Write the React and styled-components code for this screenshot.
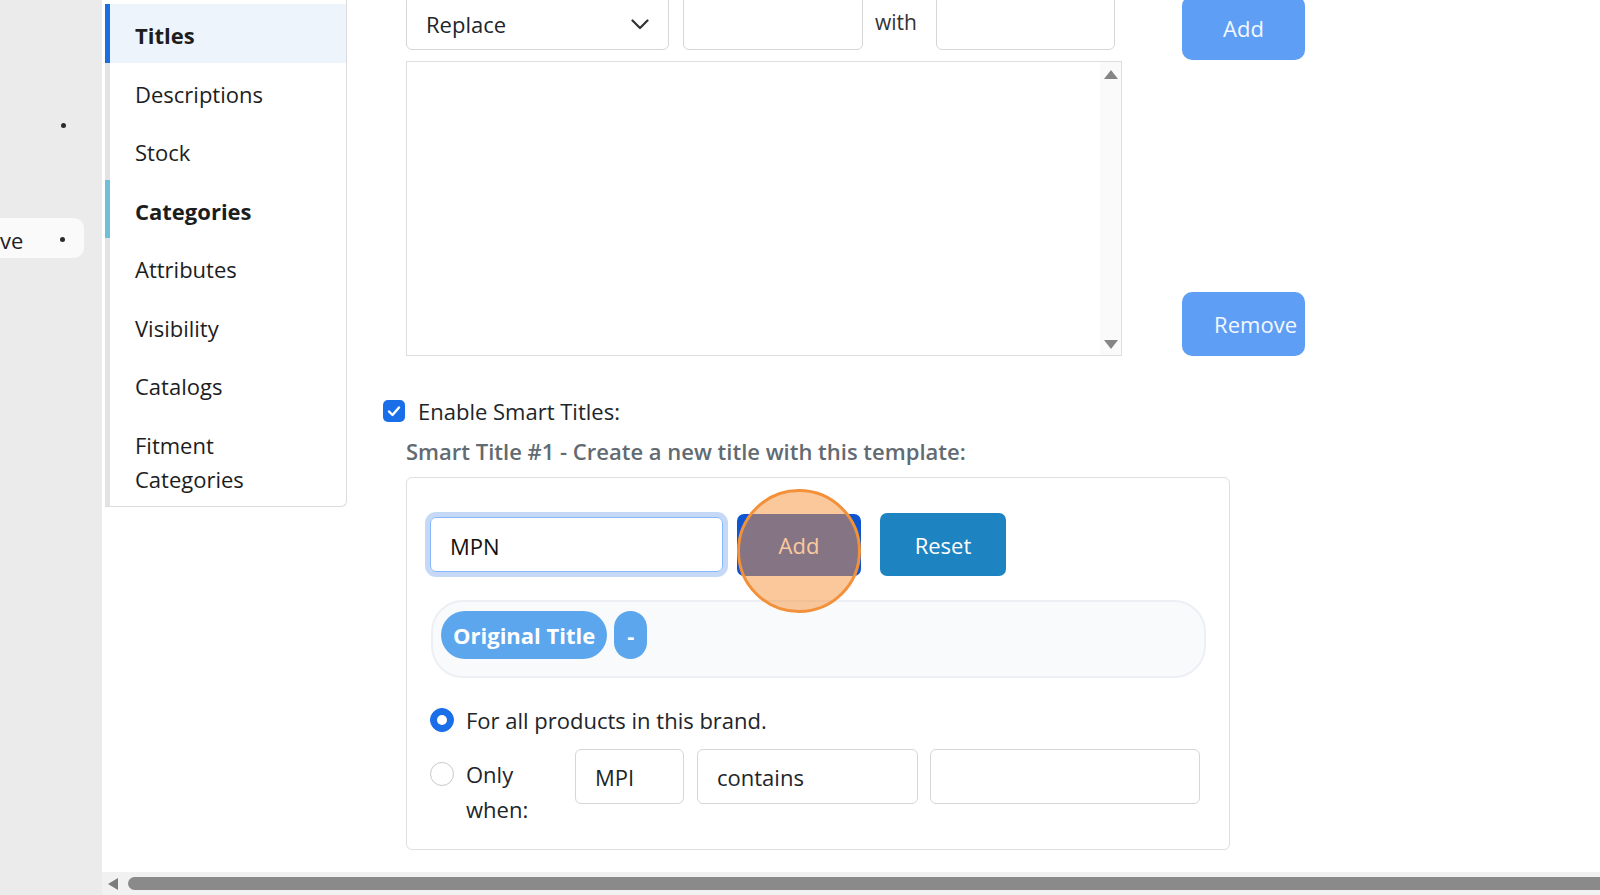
import React from 'react';
import styled, { createGlobalStyle } from 'styled-components';

const FONT = `"Open Sans", "Noto Sans", "DejaVu Sans", sans-serif`;
const FS = 22;

const Global = createGlobalStyle`
  html, body { margin: 0; padding: 0; background: #fff; }
  body { font-family: ${FONT}; color: #212529; overflow: hidden; }
  * { box-sizing: border-box; }
`;

const Page = styled.div`
  display: flex;
  width: 1600px;
  height: 895px;
  overflow: hidden;
  background: #fff;
`;

const Rail = styled.aside`
  width: 102px;
  flex: none;
  background: #ebebeb;
  display: flex;
  flex-direction: column;
`;

const RailDot = styled.span`
  width: 5px;
  height: 5px;
  border-radius: 50%;
  background: #2b2b2b;
  display: block;
  flex: none;
`;

const RailTopDot = styled(RailDot)`
  margin: 123px 0 0 61px;
`;

const RailPill = styled.div`
  margin-top: 90px;
  width: 84px;
  height: 40px;
  background: #fafafa;
  border-radius: 0 10px 10px 0;
  display: flex;
  align-items: center;
  justify-content: space-between;
  padding: 3px 19px 0 0;
  font-size: ${FS}px;
  color: #222;
`;

const Workspace = styled.div`
  flex: 1;
  min-width: 0;
  display: flex;
  flex-direction: column;
`;

const Scroller = styled.div`
  flex: 1;
  display: flex;
  align-items: flex-start;
  overflow: hidden;
  padding-left: 3px;
`;

const HScroll = styled.div`
  height: 23px;
  flex: none;
  background: #f1f1f1;
  display: flex;
  align-items: center;
  padding-left: 6px;
  gap: 10px;
`;

const ScrollArrowLeft = styled.span`
  width: 0;
  height: 0;
  border-top: 6px solid transparent;
  border-bottom: 6px solid transparent;
  border-right: 10px solid #7c7c7c;
  flex: none;
`;

const ScrollThumb = styled.div`
  flex: 1;
  height: 13px;
  background: #8a8a8a;
  border-radius: 7px 0 0 7px;
`;

const Sidebar = styled.nav`
  width: 242px;
  flex: none;
  padding-top: 4px;
  border-right: 1px solid #dcdcdc;
  border-bottom: 1px solid #dcdcdc;
  border-bottom-right-radius: 6px;
  display: flex;
  flex-direction: column;
`;

const NavItem = styled.div`
  padding: 14px 40px 10.5px 25px;
  line-height: 34px;
  font-size: ${FS}px;
  color: #1d1d1d;
  border-left: 5px solid ${(p) => p.$bar || '#e3e3e3'};
  background: ${(p) => (p.$active ? '#eef4fc' : 'transparent')};
  font-weight: ${(p) => (p.$bold ? 700 : 400)};
`;

const Main = styled.main`
  margin-left: 36px;
  margin-top: -5px;
  width: 940px;
  flex: none;
  display: flex;
  flex-direction: column;
`;

const TopGrid = styled.div`
  margin-left: 23px;
  display: grid;
  grid-template-columns: 716px 123px;
  column-gap: 60px;
  row-gap: 1px;
`;

const FilterRow = styled.div`
  display: flex;
  align-items: flex-start;
  height: 65px;
`;

const Field = styled.div`
  height: 55px;
  width: ${(p) => p.$w}px;
  flex: none;
  border: 1px solid #d6d6d6;
  border-radius: 6px;
  background: #fff;
  display: flex;
  align-items: center;
  justify-content: space-between;
  padding: ${(p) => p.$pt || 0}px 19px 0;
  font-size: ${FS}px;
  color: #212529;
  margin-left: ${(p) => p.$ml || 0}px;
`;

const WithLabel = styled.span`
  margin: 0 19px 0 12px;
  line-height: 54px;
  font-size: ${FS - 1}px;
  color: #333;
  flex: none;
`;

const LightButton = styled.button`
  width: 123px;
  height: 64px;
  border: none;
  border-radius: 10px;
  background: #5e9ff5;
  color: #f4f8ff;
  font-family: ${FONT};
  font-size: ${FS}px;
  padding: 0;
  text-align: ${(p) => p.$align || 'center'};
  padding-right: ${(p) => p.$pr || 0}px;
  margin-top: ${(p) => p.$mt || 0}px;
  align-self: ${(p) => p.$self || 'start'};
`;

const Listbox = styled.div`
  height: 295px;
  border: 1px solid #dedede;
  display: flex;
  justify-content: flex-end;
`;

const FakeVScroll = styled.div`
  width: 21px;
  background: #fafafa;
  display: flex;
  flex-direction: column;
  justify-content: space-between;
  align-items: center;
  padding: 8px 0 6px;
`;

const TriUp = styled.span`
  width: 0;
  height: 0;
  border-left: 7px solid transparent;
  border-right: 7px solid transparent;
  border-bottom: 9px solid #858585;
`;

const TriDown = styled.span`
  width: 0;
  height: 0;
  border-left: 7px solid transparent;
  border-right: 7px solid transparent;
  border-top: 9px solid #858585;
`;

const CheckRow = styled.label`
  margin-top: 38px;
  height: 34px;
  display: flex;
  align-items: center;
  gap: 13px;
  font-size: ${FS}px;
  color: #212529;
`;

const CheckBox = styled.span`
  width: 22px;
  height: 22px;
  border-radius: 5px;
  background: #1a6ee8;
  display: flex;
  align-items: center;
  justify-content: center;
  flex: none;
`;

const SmartHeading = styled.div`
  margin: 6px 0 0 23px;
  line-height: 34px;
  font-size: ${FS}px;
  font-weight: 600;
  color: #626a72;
`;

const Card = styled.section`
  margin: 9px 0 0 23px;
  width: 824px;
  border: 1px solid #dfdfdf;
  border-radius: 6px;
  padding: 35px 23px 22px 23px;
  display: flex;
  flex-direction: column;
`;

const BuilderRow = styled.div`
  display: flex;
  align-items: center;
  gap: 14px;
`;

const TemplateInput = styled.div`
  width: 293px;
  height: 55px;
  border: 1px solid #86b7fe;
  box-shadow: 0 0 0 5px #c5d9f7;
  border-radius: 6px;
  display: flex;
  align-items: center;
  padding: 3px 0 0 19px;
  font-size: ${FS}px;
  color: #111;
`;

const ClickWrap = styled.div`
  position: relative;
  flex: none;
`;

const SolidButton = styled.button`
  width: ${(p) => p.$w}px;
  height: ${(p) => p.$h}px;
  border: none;
  border-radius: 7px;
  background: ${(p) => p.$bg};
  color: #fff;
  font-family: ${FONT};
  font-size: ${FS}px;
  padding: 0;
  margin-left: ${(p) => p.$ml || 0}px;
  display: block;
`;

const ClickRing = styled.span`
  position: absolute;
  left: 50%;
  top: 50%;
  width: 124px;
  height: 124px;
  transform: translate(-50%, calc(-50% + 6px));
  border-radius: 50%;
  border: 3px solid #f2913a;
  background: rgba(247, 148, 60, 0.51);
  pointer-events: none;
`;

const TagRow = styled.div`
  margin: 24px 0 0 1px;
  width: 775px;
  height: 78px;
  border: 2px solid #eceff3;
  border-radius: 32px;
  background: #f9fafc;
  padding: 9px 8px;
  display: flex;
  align-items: flex-start;
  gap: 7px;
`;

const TagPill = styled.span`
  height: 48px;
  min-width: ${(p) => p.$min || 0}px;
  padding: 0 ${(p) => p.$px ?? 12}px;
  border-radius: 24px;
  background: #5ba6ec;
  color: #fff;
  font-weight: 700;
  font-size: ${FS}px;
  display: flex;
  align-items: center;
  justify-content: center;
`;

const RadioRow = styled.label`
  margin-top: ${(p) => p.$mt}px;
  display: flex;
  align-items: ${(p) => (p.$top ? 'flex-start' : 'center')};
  gap: 12px;
  font-size: ${FS}px;
  color: #212529;
  line-height: ${(p) => (p.$top ? 35 : 34)}px;
`;

const RadioDot = styled.span`
  width: 24px;
  height: 24px;
  border-radius: 50%;
  flex: none;
  margin-top: ${(p) => p.$mt || 0}px;
  background: ${(p) => (p.$on ? '#1a6ee8' : '#fff')};
  border: 1px solid ${(p) => (p.$on ? '#1a6ee8' : '#c9c9c9')};
  display: flex;
  align-items: center;
  justify-content: center;
  &::after {
    content: '';
    width: 10px;
    height: 10px;
    border-radius: 50%;
    background: #fff;
    display: ${(p) => (p.$on ? 'block' : 'none')};
  }
`;

const WrapLabel = styled.span`
  width: 97px;
  margin-top: 7.5px;
  flex: none;
`;

const CondField = styled(Field)`
  justify-content: flex-start;
`;

const Chevron = () => (
  <svg width="18" height="11" viewBox="0 0 18 11" fill="none">
    <polyline points="1.5,1.5 9,9 16.5,1.5" stroke="#2f3337" strokeWidth="2.2" strokeLinecap="round" strokeLinejoin="round" />
  </svg>
);

const Check = () => (
  <svg width="14" height="12" viewBox="0 0 14 12" fill="none">
    <polyline points="2,6.5 5.5,10 12,2.5" stroke="#fff" strokeWidth="2.4" strokeLinecap="round" strokeLinejoin="round" />
  </svg>
);

const navItems = [
  { label: 'Titles', active: true, bold: true, bar: '#1a6ee0' },
  { label: 'Descriptions' },
  { label: 'Stock' },
  { label: 'Categories', bold: true, bar: '#6dc0d8' },
  { label: 'Attributes' },
  { label: 'Visibility' },
  { label: 'Catalogs' },
  { label: 'Fitment Categories' },
];

export default function App() {
  return (
    <>
      <Global />
      <Page>
        <Rail>
          <RailTopDot />
          <RailPill>
            <span>ve</span>
            <RailDot />
          </RailPill>
        </Rail>
        <Workspace>
          <Scroller>
            <Sidebar>
              {navItems.map((n) => (
                <NavItem key={n.label} $active={n.active} $bold={n.bold} $bar={n.bar}>
                  {n.label}
                </NavItem>
              ))}
            </Sidebar>
            <Main>
              <TopGrid>
                <FilterRow>
                  <Field $w={263} $pt={3}>
                    <span>Replace</span>
                    <Chevron />
                  </Field>
                  <Field $w={180} $ml={14} />
                  <WithLabel>with</WithLabel>
                  <Field $w={179} />
                </FilterRow>
                <LightButton $mt={1}>Add</LightButton>
                <Listbox>
                  <FakeVScroll>
                    <TriUp />
                    <TriDown />
                  </FakeVScroll>
                </Listbox>
                <LightButton $self="end" $align="right" $pr={8}>Remove</LightButton>
              </TopGrid>

              <CheckRow>
                <CheckBox>
                  <Check />
                </CheckBox>
                Enable Smart Titles:
              </CheckRow>
              <SmartHeading>Smart Title #1 - Create a new title with this template:</SmartHeading>

              <Card>
                <BuilderRow>
                  <TemplateInput>MPN</TemplateInput>
                  <ClickWrap>
                    <SolidButton $w={124} $h={62} $bg="#0e55cf">Add</SolidButton>
                    <ClickRing />
                  </ClickWrap>
                  <SolidButton $w={126} $h={63} $bg="#1e83c1" $ml={5}>Reset</SolidButton>
                </BuilderRow>
                <TagRow>
                  <TagPill>Original Title</TagPill>
                  <TagPill $px={0} $min={33}>-</TagPill>
                </TagRow>
                <RadioRow $mt={25}>
                  <RadioDot $on />
                  For all products in this brand.
                </RadioRow>
                <RadioRow $mt={12} $top>
                  <RadioDot $mt={12.5} />
                  <WrapLabel>Only when:</WrapLabel>
                  <CondField $w={109} $pt={2}>MPI</CondField>
                  <CondField $w={221} $ml={1} $pt={2}>contains</CondField>
                  <CondField $w={270} />
                </RadioRow>
              </Card>
            </Main>
          </Scroller>
          <HScroll>
            <ScrollArrowLeft />
            <ScrollThumb />
          </HScroll>
        </Workspace>
      </Page>
    </>
  );
}
